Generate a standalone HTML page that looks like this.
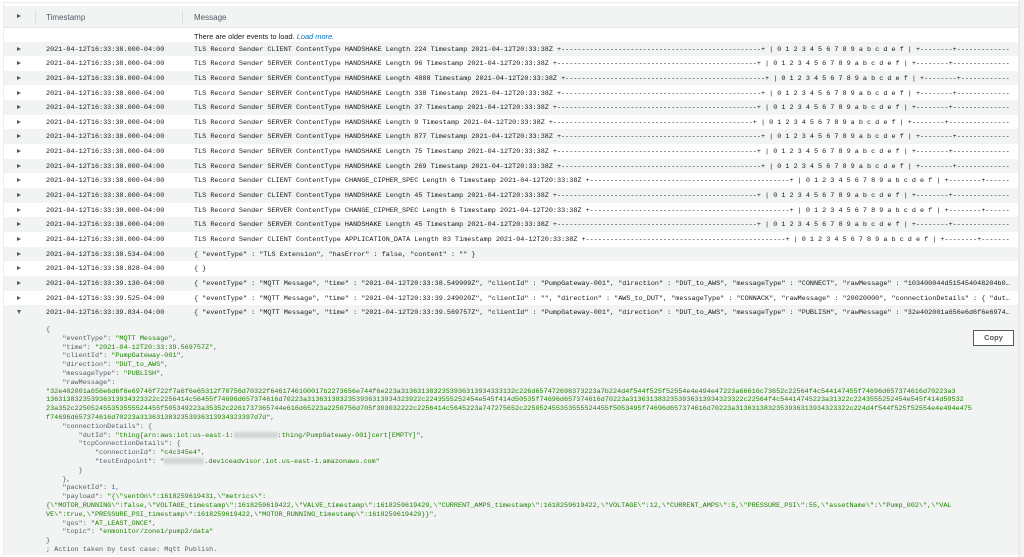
<!DOCTYPE html>
<html><head><meta charset="utf-8"><style>
*{margin:0;padding:0;box-sizing:border-box}
body{width:1024px;height:557px;overflow:hidden;background:#fff;font-family:"Liberation Sans",sans-serif;position:relative}
.frame{position:absolute;left:3px;top:2px;width:1016px;height:553px;border:1px solid #eaeded;border-bottom:none;overflow:hidden}
.sb{position:absolute;right:0;top:0;width:5px;height:557px;background:#f4f4f4;border-left:1px solid #e6e6e6}
.hdr{position:absolute;left:0;top:3px;width:1014px;height:22px;background:#f2f3f3;border-bottom:1px solid #e4e6e6;font-size:8px;color:#545b64}
.hdr span{position:absolute;top:7px}
.sep{position:absolute;top:5px;width:1px;height:12px;background:#dcdede}
.tri{position:absolute;left:13px;width:0;height:0;border-left:4px solid #545b64;border-top:2.5px solid transparent;border-bottom:2.5px solid transparent}
.tri.d{border-top:4px solid #545b64;border-left:2.5px solid transparent;border-right:2.5px solid transparent;border-bottom:0}
.row{position:absolute;left:0;width:1014px;height:14.66px;font-family:"Liberation Mono",monospace;font-size:6.8px;color:#16191f;white-space:nowrap}
.row.g{background:#f2f3f3}
.row .ts{position:absolute;left:42px;top:4px}
.row .m{position:absolute;left:190px;top:4px;width:816px;overflow:hidden}
.row .tri{top:5px}
.older{position:absolute;left:190px;top:29px;font-size:7.4px;color:#16191f}
.older i{color:#0073bb}
.exp{position:absolute;left:0;top:315px;width:1014px;height:240px;background:#f2f3f3}
pre{position:absolute;left:42px;top:8px;font-family:"Liberation Mono",monospace;font-size:6.8px;line-height:8.8px;color:#545b64}
.s{color:#1d8102}.n{color:#0073bb}
.bl{display:inline-block;width:44px;height:6px;background:#d3d6d6;vertical-align:middle;filter:blur(1px)}
.copy{position:absolute;left:969px;top:12px;width:41px;height:16px;border:1px solid #545b64;background:#fff;font-size:7.5px;font-weight:bold;color:#545b64;text-align:center;line-height:14px}
</style></head><body>
<div class="frame">
<div class="hdr"><div class="tri" style="top:8px"></div><div class="sep" style="left:31px"></div><span style="left:42px">Timestamp</span><div class="sep" style="left:178px"></div><span style="left:190px">Message</span></div>
<div class="older">There are older events to load. <i>Load more.</i></div>

<div class="row g" style="top:38.5px"><div class="tri"></div><span class="ts">2021-04-12T16:33:38.000-04:00</span><span class="m">TLS Record Sender CLIENT ContentType HANDSHAKE Length 224 Timestamp 2021-04-12T20:33:38Z +-------------------------------------------------+ | 0 1 2 3 4 5 6 7 8 9 a b c d e f | +--------+-------------------+</span></div>
<div class="row" style="top:53.2px"><div class="tri"></div><span class="ts">2021-04-12T16:33:38.000-04:00</span><span class="m">TLS Record Sender SERVER ContentType HANDSHAKE Length 96 Timestamp 2021-04-12T20:33:38Z +-------------------------------------------------+ | 0 1 2 3 4 5 6 7 8 9 a b c d e f | +--------+-------------------+</span></div>
<div class="row g" style="top:67.8px"><div class="tri"></div><span class="ts">2021-04-12T16:33:38.000-04:00</span><span class="m">TLS Record Sender SERVER ContentType HANDSHAKE Length 4888 Timestamp 2021-04-12T20:33:38Z +-------------------------------------------------+ | 0 1 2 3 4 5 6 7 8 9 a b c d e f | +--------+-------------------+</span></div>
<div class="row" style="top:82.5px"><div class="tri"></div><span class="ts">2021-04-12T16:33:38.000-04:00</span><span class="m">TLS Record Sender SERVER ContentType HANDSHAKE Length 338 Timestamp 2021-04-12T20:33:38Z +-------------------------------------------------+ | 0 1 2 3 4 5 6 7 8 9 a b c d e f | +--------+-------------------+</span></div>
<div class="row g" style="top:97.1px"><div class="tri"></div><span class="ts">2021-04-12T16:33:38.000-04:00</span><span class="m">TLS Record Sender SERVER ContentType HANDSHAKE Length 37 Timestamp 2021-04-12T20:33:38Z +-------------------------------------------------+ | 0 1 2 3 4 5 6 7 8 9 a b c d e f | +--------+-------------------+</span></div>
<div class="row" style="top:111.8px"><div class="tri"></div><span class="ts">2021-04-12T16:33:38.000-04:00</span><span class="m">TLS Record Sender SERVER ContentType HANDSHAKE Length 9 Timestamp 2021-04-12T20:33:38Z +-------------------------------------------------+ | 0 1 2 3 4 5 6 7 8 9 a b c d e f | +--------+-------------------+</span></div>
<div class="row g" style="top:126.4px"><div class="tri"></div><span class="ts">2021-04-12T16:33:38.000-04:00</span><span class="m">TLS Record Sender SERVER ContentType HANDSHAKE Length 877 Timestamp 2021-04-12T20:33:38Z +-------------------------------------------------+ | 0 1 2 3 4 5 6 7 8 9 a b c d e f | +--------+-------------------+</span></div>
<div class="row" style="top:141.1px"><div class="tri"></div><span class="ts">2021-04-12T16:33:38.000-04:00</span><span class="m">TLS Record Sender SERVER ContentType HANDSHAKE Length 75 Timestamp 2021-04-12T20:33:38Z +-------------------------------------------------+ | 0 1 2 3 4 5 6 7 8 9 a b c d e f | +--------+-------------------+</span></div>
<div class="row g" style="top:155.8px"><div class="tri"></div><span class="ts">2021-04-12T16:33:38.000-04:00</span><span class="m">TLS Record Sender SERVER ContentType HANDSHAKE Length 269 Timestamp 2021-04-12T20:33:38Z +-------------------------------------------------+ | 0 1 2 3 4 5 6 7 8 9 a b c d e f | +--------+-------------------+</span></div>
<div class="row" style="top:170.4px"><div class="tri"></div><span class="ts">2021-04-12T16:33:38.000-04:00</span><span class="m">TLS Record Sender CLIENT ContentType CHANGE_CIPHER_SPEC Length 6 Timestamp 2021-04-12T20:33:38Z +-------------------------------------------------+ | 0 1 2 3 4 5 6 7 8 9 a b c d e f | +--------+-------------------+</span></div>
<div class="row g" style="top:185px"><div class="tri"></div><span class="ts">2021-04-12T16:33:38.000-04:00</span><span class="m">TLS Record Sender CLIENT ContentType HANDSHAKE Length 45 Timestamp 2021-04-12T20:33:38Z +-------------------------------------------------+ | 0 1 2 3 4 5 6 7 8 9 a b c d e f | +--------+-------------------+</span></div>
<div class="row" style="top:199.7px"><div class="tri"></div><span class="ts">2021-04-12T16:33:38.000-04:00</span><span class="m">TLS Record Sender SERVER ContentType CHANGE_CIPHER_SPEC Length 6 Timestamp 2021-04-12T20:33:38Z +-------------------------------------------------+ | 0 1 2 3 4 5 6 7 8 9 a b c d e f | +--------+-------------------+</span></div>
<div class="row g" style="top:214.3px"><div class="tri"></div><span class="ts">2021-04-12T16:33:38.000-04:00</span><span class="m">TLS Record Sender SERVER ContentType HANDSHAKE Length 45 Timestamp 2021-04-12T20:33:38Z +-------------------------------------------------+ | 0 1 2 3 4 5 6 7 8 9 a b c d e f | +--------+-------------------+</span></div>
<div class="row" style="top:229px"><div class="tri"></div><span class="ts">2021-04-12T16:33:38.000-04:00</span><span class="m">TLS Record Sender CLIENT ContentType APPLICATION_DATA Length 83 Timestamp 2021-04-12T20:33:38Z +-------------------------------------------------+ | 0 1 2 3 4 5 6 7 8 9 a b c d e f | +--------+-------------------+</span></div>
<div class="row g" style="top:243.6px"><div class="tri"></div><span class="ts">2021-04-12T16:33:38.534-04:00</span><span class="m">{ "eventType" : "TLS Extension", "hasError" : false, "content" : "" }</span></div>
<div class="row" style="top:258.3px"><div class="tri"></div><span class="ts">2021-04-12T16:33:38.828-04:00</span><span class="m">{ }</span></div>
<div class="row g" style="top:273px"><div class="tri"></div><span class="ts">2021-04-12T16:33:39.130-04:00</span><span class="m">{ "eventType" : "MQTT Message", "time" : "2021-04-12T20:33:38.549909Z", "clientId" : "PumpGateway-001", "direction" : "DUT_to_AWS", "messageType" : "CONNECT", "rawMessage" : "103400044d515454048204b0…</span></div>
<div class="row" style="top:287.6px"><div class="tri"></div><span class="ts">2021-04-12T16:33:39.525-04:00</span><span class="m">{ "eventType" : "MQTT Message", "time" : "2021-04-12T20:33:39.249020Z", "clientId" : "", "direction" : "AWS_to_DUT", "messageType" : "CONNACK", "rawMessage" : "20020000", "connectionDetails" : { "dut…</span></div>
<div class="row g" style="top:302.3px"><div class="tri d"></div><span class="ts">2021-04-12T16:33:39.834-04:00</span><span class="m">{ "eventType" : "MQTT Message", "time" : "2021-04-12T20:33:39.569757Z", "clientId" : "PumpGateway-001", "direction" : "DUT_to_AWS", "messageType" : "PUBLISH", "rawMessage" : "32e402001a656e6d6f6e6974…</span></div>

<div class="exp">
<div class="copy">Copy</div>
<pre>{
    "eventType": <span class="s">"MQTT Message"</span>,
    "time": <span class="s">"2021-04-12T20:33:39.569757Z"</span>,
    "clientId": <span class="s">"PumpGateway-001"</span>,
    "direction": <span class="s">"DUT_to_AWS"</span>,
    "messageType": <span class="s">"PUBLISH"</span>,
    "rawMessage":
<span class="s">"32e402001a656e6d6f6e69746f722f7a6f6e65312f70756d70322f6461746100017b2273656e744f6e223a3136313832353936313934333132c226d657472696373223a7b224d4f544f525f52554e4e494e47223a66616c73652c22564f4c544147455f74696d657374616d70223a3
136313832353936313934323322c2256414c56455f74696d657374616d70223a3136313832353936313934323922c2243555252454e545f414d50535f74696d657374616d70223a3136313832353936313934323322c22564f4c54414745223a31322c2243555252454e545f414d50532
23a352c225052455353555524455f505349223a35352c2261737365744e616d65223a2250756d705f303032222c2256414c5645223a747275652c225052455353555524455f5053495f74696d657374616d70223a3136313832353936313934323322c224d4f544f525f52554e4e494e475
f74696d657374616d70223a3136313832353936313934323397d7d"</span>,
    "connectionDetails": {
        "dutId": <span class="s">"thing[arn:aws:iot:us-east-1:<span class="bl"></span>:thing/PumpGateway-001]cert[EMPTY]"</span>,
        "tcpConnectionDetails": {
            "connectionId": <span class="s">"c4c345e4"</span>,
            "testEndpoint": <span class="s">"<span class="bl" style="width:40px"></span>.deviceadvisor.iot.us-east-1.amazonaws.com"</span>
        }
    },
    "packetId": <span class="n">1</span>,
    "payload": <span class="s">"{\"sentOn\":1618259619431,\"metrics\":
{\"MOTOR_RUNNING\":false,\"VOLTAGE_timestamp\":1618259619422,\"VALVE_timestamp\":1618259619429,\"CURRENT_AMPS_timestamp\":1618259619422,\"VOLTAGE\":12,\"CURRENT_AMPS\":5,\"PRESSURE_PSI\":55,\"assetName\":\"Pump_002\",\"VAL
VE\":true,\"PRESSURE_PSI_timestamp\":1618259619422,\"MOTOR_RUNNING_timestamp\":1618259619429}}"</span>,
    "qos": <span class="s">"AT_LEAST_ONCE"</span>,
    "topic": <span class="s">"enmonitor/zone1/pump2/data"</span>
}
; Action taken by test case: Mqtt Publish.</pre>
</div>
</div>
<div class="sb"></div>
</body></html>
